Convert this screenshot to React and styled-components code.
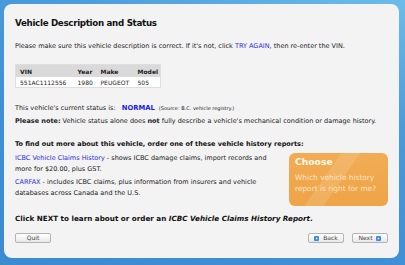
import React from 'react';
import styled, { createGlobalStyle } from 'styled-components';

const GlobalStyle = createGlobalStyle`
  html, body {
    margin: 0;
    padding: 0;
  }
  body {
    width: 405px;
    height: 265px;
    overflow: hidden;
    background: linear-gradient(200deg, #6cbcea 0%, #4b9cdc 30%, #3f90d6 60%, #3b8bd3 100%);
    font-family: "DejaVu Sans", Verdana, sans-serif;
    color: #1e1e1e;
  }
`;

const Page = styled.div`
  width: 405px;
  height: 265px;
  box-sizing: border-box;
  padding: 4px 6px 7px 4px;
`;

const Panel = styled.div`
  height: 100%;
  box-sizing: border-box;
  background: #f3f3f3;
  border-radius: 8px;
  padding: 13px 11px 0 11px;
  display: flex;
  flex-direction: column;
`;

const Title = styled.h1`
  margin: 0;
  font-size: 8.7px;
  letter-spacing: -0.3px;
  line-height: 12px;
  font-weight: bold;
  color: #111;
`;

const Text = styled.p`
  margin: ${p => p.$mt || 0}px 0 0;
  font-size: 6.5px;
  line-height: 8px;
  color: #222;
  white-space: nowrap;
`;

const Link = styled.span`
  color: #2b2be0;
  text-decoration: none;
`;

const Table = styled.table`
  margin-top: 14px;
  width: 145px;
  border-collapse: collapse;
  border: 1px solid #dedede;
  font-size: 6px;
  table-layout: fixed;
  th, td {
    text-align: left;
    padding: 0 0 0 4px;
    white-space: nowrap;
    overflow: hidden;
  }
  th {
    background: #d9d9d9;
    height: 12px;
    font-weight: bold;
    color: #222;
  }
  td {
    background: #fff;
    height: 10px;
    color: #222;
  }
`;

const Status = styled.span`
  color: #1a1ae8;
  font-weight: bold;
  font-size: 6.8px;
  margin-left: 4px;
`;

const Source = styled.span`
  font-size: 5px;
  margin-left: 4px;
`;

const Heading = styled.p`
  margin: ${p => p.$mt || 0}px 0 0;
  font-size: ${p => p.$size || 6.5}px;
  line-height: ${p => p.$lh || 8}px;
  font-weight: bold;
  color: #111;
  white-space: nowrap;
  em {
    font-style: italic;
  }
`;

const ReportRow = styled.div`
  margin-top: 5px;
  display: flex;
  justify-content: space-between;
  align-items: flex-start;
`;

const ReportList = styled.div`
  width: 266px;
`;

const ReportItem = styled.p`
  margin: 0 0 2px;
  font-size: 6.5px;
  line-height: 11px;
  color: #222;
`;

const ChooseCard = styled.div`
  width: 99px;
  height: 53px;
  box-sizing: border-box;
  border-radius: 6px;
  padding: 3px 6px;
  background:
    linear-gradient(125deg, rgba(255,255,255,0) 0%, rgba(255,255,255,0) 38%, rgba(255,255,255,0.12) 39%, rgba(255,255,255,0.12) 52%, rgba(255,255,255,0) 53%),
    linear-gradient(180deg, #f2ac54 0%, #eea447 100%);
  color: #fff;
`;

const ChooseTitle = styled.div`
  font-size: 9.2px;
  font-weight: bold;
  line-height: 12px;
  color: #fff9f0;
`;

const ChooseText = styled.div`
  margin-top: 4px;
  font-size: 7.4px;
  line-height: 11px;
  color: #fde4c4;
`;

const ButtonBar = styled.div`
  margin-top: 9px;
  display: flex;
  justify-content: space-between;
  align-items: center;
`;

const ButtonGroup = styled.div`
  display: flex;
  gap: 8px;
`;

const Button = styled.button`
  width: 36px;
  height: 10px;
  padding: 0;
  box-sizing: border-box;
  border: 1px solid #b4b4b4;
  border-radius: 2px;
  background: linear-gradient(180deg, #ffffff 0%, #f4f4f4 50%, #e6e6e6 100%);
  font-family: "DejaVu Sans", Verdana, sans-serif;
  font-size: 6px;
  line-height: 8px;
  color: #444;
  display: flex;
  align-items: center;
  justify-content: center;
  gap: 4px;
`;

const ArrowIcon = ({ dir }) => (
  <svg width="5" height="5" viewBox="0 0 10 10">
    <rect x="0" y="0" width="10" height="10" rx="2" fill="#3a8be0" />
    {dir === 'left'
      ? <path d="M6.5 2.5 L3 5 L6.5 7.5 Z" fill="#fff" />
      : <path d="M3.5 2.5 L7 5 L3.5 7.5 Z" fill="#fff" />}
  </svg>
);

const App = () => {
  return (
    <>
      <GlobalStyle />
      <Page>
        <Panel>
          <Title>Vehicle Description and Status</Title>
          <Text $mt={13}>
            Please make sure this vehicle description is correct. If it's not, click <Link>TRY AGAIN</Link>, then re-enter the VIN.
          </Text>
          <Table>
            <colgroup>
              <col style={{ width: '58px' }} />
              <col style={{ width: '23px' }} />
              <col style={{ width: '37px' }} />
              <col style={{ width: '27px' }} />
            </colgroup>
            <thead>
              <tr>
                <th>VIN</th>
                <th>Year</th>
                <th>Make</th>
                <th>Model</th>
              </tr>
            </thead>
            <tbody>
              <tr>
                <td>551AC1112556</td>
                <td>1980</td>
                <td>PEUGEOT</td>
                <td>505</td>
              </tr>
            </tbody>
          </Table>
          <Text $mt={16}>
            This vehicle's current status is: <Status>NORMAL</Status>
            <Source>(Source: B.C. vehicle registry.)</Source>
          </Text>
          <Text $mt={5}>
            <b>Please note:</b> Vehicle status alone does <b>not</b> fully describe a vehicle's mechanical condition or damage history.
          </Text>
          <Heading $mt={15}>To find out more about this vehicle, order one of these vehicle history reports:</Heading>
          <ReportRow>
            <ReportList>
              <ReportItem>
                <Link>ICBC Vehicle Claims History</Link> - shows ICBC damage claims, import records and more for $20.00, plus GST.
              </ReportItem>
              <ReportItem>
                <Link>CARFAX</Link> - includes ICBC claims, plus information from insurers and vehicle databases across Canada and the U.S.
              </ReportItem>
            </ReportList>
            <ChooseCard>
              <ChooseTitle>Choose</ChooseTitle>
              <ChooseText>Which vehicle history report is right for me?</ChooseText>
            </ChooseCard>
          </ReportRow>
          <Heading $mt={8} $size={7.2} $lh={10}>
            Click NEXT to learn about or order an <em>ICBC Vehicle Claims History Report</em>.
          </Heading>
          <ButtonBar>
            <Button>Quit</Button>
            <ButtonGroup>
              <Button><ArrowIcon dir="left" />Back</Button>
              <Button>Next<ArrowIcon dir="right" /></Button>
            </ButtonGroup>
          </ButtonBar>
        </Panel>
      </Page>
    </>
  );
};

export default App;
